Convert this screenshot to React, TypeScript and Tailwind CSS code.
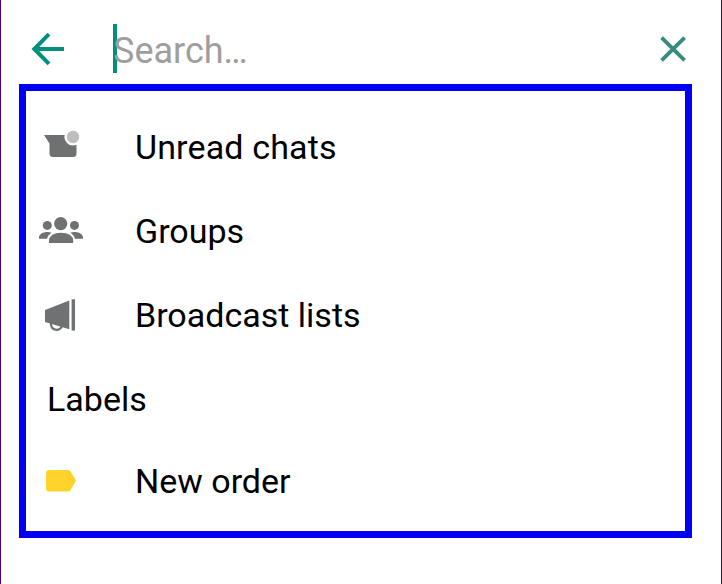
import React from 'react';
import { clsx } from 'clsx';

function BackIcon() {
  return (
    <svg width="34" height="34" viewBox="31 32 34 34" fill="none" stroke="#008f7e" strokeWidth="4">
      <path d="M64 49H34.5M49 34.2L34.3 49L49 63.8" />
    </svg>
  );
}

function CloseIcon() {
  return (
    <svg width="30" height="30" viewBox="658 34 30 30" fill="none" stroke="#378c7d" strokeWidth="3.8">
      <path d="M661.6 37.6L684.6 60.4M684.6 37.6L661.6 60.4" />
    </svg>
  );
}

function UnreadIcon() {
  return (
    <svg width="60" height="50" viewBox="0 2 60 50">
      <path d="M14 15H46.5V33.5a3.5 3.5 0 0 1-3.5 3.5H23a3.5 3.5 0 0 1-3.5-3.5V23.5z" fill="#6f7071" />
      <circle cx="43" cy="17" r="8.6" fill="#fff" />
      <circle cx="43" cy="17" r="6.2" fill="#bebebe" />
    </svg>
  );
}

function GroupsIcon() {
  return (
    <svg width="60" height="50" viewBox="0 1 60 50" fill="#707172">
      <circle cx="30.7" cy="18.6" r="6.6" />
      <circle cx="17.3" cy="20.4" r="4.5" />
      <circle cx="44.5" cy="20.4" r="4.5" />
      <path d="M19 38v-2.8c0-4.4 5.4-7.4 12.1-7.4s12.1 3 12.1 7.4V38z" />
      <path d="M9 33.7v-1.2c0-3.4 4-5.5 8.5-5.5c1.6 0 3 .2 4.2.7c-2.4 1.4-4 3.3-4.6 6z" />
      <path d="M53 33.7v-1.2c0-3.4-4-5.5-8.5-5.5c-1.6 0-3 .2-4.2.7c2.4 1.4 4 3.3 4.6 6z" />
    </svg>
  );
}

function BroadcastIcon() {
  return (
    <svg width="60" height="50" viewBox="0 0 60 50">
      <path d="M15 20L39.3 10.5V39.3L15 32z" fill="#707172" />
      <path d="M21 33a5.6 5.6 0 0 0 11.2 2.2" fill="none" stroke="#707172" strokeWidth="2.3" />
      <path d="M41.6 9.3H45V40.5H41.6z" fill="#707172" />
    </svg>
  );
}

function LabelIcon() {
  return (
    <svg width="60" height="50" viewBox="0 1 60 50">
      <path
        d="M19.2 15H37.8q1.7 0 2.7 1.3L46 25.7L40.5 35.2q-1 1.3-2.7 1.3H19.2a3.2 3.2 0 0 1-3.2-3.2V18.2a3.2 3.2 0 0 1 3.2-3.2z"
        fill="#ffd329"
      />
    </svg>
  );
}

function FilterRow({
  icon,
  label,
  labelClassName,
}: {
  icon: React.ReactNode;
  label: string;
  labelClassName?: string;
}) {
  return (
    <div className="flex h-[84px] items-center pl-1">
      {icon}
      <span className={clsx('ml-[45px] whitespace-nowrap', labelClassName)}>{label}</span>
    </div>
  );
}

export default function App() {
  return (
    <div className="h-[584px] w-[722px] overflow-hidden border-x border-[#4b0082] bg-white font-['Roboto',sans-serif] text-[34px] leading-10 text-black">
      <header className="flex h-[84px] items-center pt-[14px] pr-[33px] pl-[30px]">
        <BackIcon />
        <div className="-mt-0.5 ml-12 flex h-[49px] flex-1 items-center border-l-4 border-[#008f7e]">
          <span className="-ml-1 pt-1.5 text-[36px] text-[#9e9e9e]">Search…</span>
        </div>
        <CloseIcon />
      </header>
      <main className="ml-[18px] h-[454px] w-[673px] border-7 border-[#0000f5] pt-[14px]">
        <FilterRow icon={<UnreadIcon />} label="Unread chats" labelClassName="tracking-[0.15px]" />
        <FilterRow icon={<GroupsIcon />} label="Groups" />
        <FilterRow icon={<BroadcastIcon />} label="Broadcast lists" />
        <h2 className="flex h-[84px] items-center pl-[21px]">Labels</h2>
        <div className="-mt-0.5">
          <FilterRow icon={<LabelIcon />} label="New order" />
        </div>
      </main>
    </div>
  );
}
